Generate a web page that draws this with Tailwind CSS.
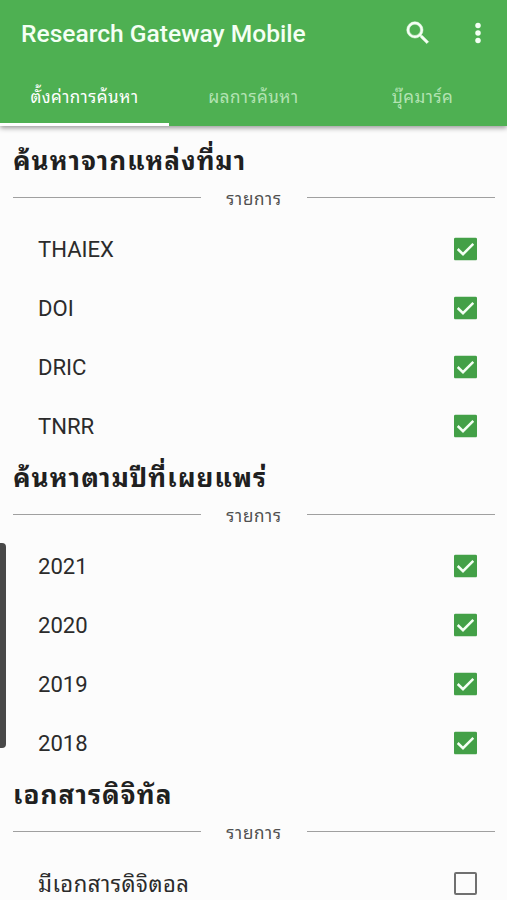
<!DOCTYPE html>
<html lang="th">
<head>
<meta charset="utf-8">
<title>Research Gateway Mobile</title>
<script src="https://cdn.jsdelivr.net/npm/@tailwindcss/browser@4"></script>
</head>
<body class="relative flex h-[900px] w-[507px] flex-col overflow-hidden bg-[#fcfcfc] font-[Roboto,'Noto_Sans_Thai_Looped',sans-serif] text-[#2b2b2b]">
<header class="relative z-10 flex h-[126px] shrink-0 flex-col bg-[#4eb052] text-white shadow-[0_2px_5px_rgba(0,0,0,0.4)]">
  <div class="flex h-[68px] items-center pl-[21px] pr-[14px]">
    <h1 class="flex-1 whitespace-nowrap text-[24.6px] font-medium text-[#f4fff4]">Research Gateway Mobile</h1>
    <svg class="mr-[30px] h-[30px] w-[30px] -translate-y-[1px]" viewBox="0 0 24 24" fill="#f4fff4" stroke="#f4fff4" stroke-width=".4"><path d="M15.5 14h-.79l-.28-.27A6.47 6.47 0 0 0 16 9.5 6.5 6.5 0 1 0 9.5 16c1.61 0 3.09-.59 4.23-1.57l.27.28v.79l5 4.99L20.49 19l-4.99-5zm-6 0C7.01 14 5 11.99 5 9.5S7.01 5 9.500 5 14 7.010 14 9.500 11.990 14 9.500 14z"/></svg>
    <svg class="h-[30px] w-[30px] -translate-y-[1px]" viewBox="0 0 24 24" fill="#f4fff4"><circle cx="12" cy="6" r="2.200"/><circle cx="12" cy="12" r="2.200"/><circle cx="12" cy="18" r="2.200"/></svg>
  </div>
  <nav class="grid h-[58px] grid-cols-3 text-center text-[17px] leading-[58px] tracking-[0.5px]">
    <a class="h-[58px] border-b-[3px] border-white"><span>ตั้งค่าการค้นหา</span></a>
    <a class="h-[58px] text-[#b3e3b3]"><span>ผลการค้นหา</span></a>
    <a class="h-[58px] text-[#b3e3b3]"><span>บุ๊คมาร์ค</span></a>
  </nav>
</header>
<main id="list" class="shrink-0 pt-[13px]"></main>
<div class="absolute -left-[4px] top-[543px] h-[205px] w-[9.500px] rounded-[4px] bg-[#484848]"></div>
<script>
const sections = [
  ['ค้นหาจากแหล่งที่มา', ['THAIEX', 'DOI', 'DRIC', 'TNRR'], true],
  ['ค้นหาตามปีที่เผยแพร่', ['2021', '2020', '2019', '2018'], true],
  ['เอกสารดิจิทัล', ['มีเอกสารดิจิตอล'], false]
];
const on = '<svg class="h-[23px] w-[23px] -translate-y-[0.5px]" viewBox="0 0 23 23"><rect width="23" height="23" rx="1.500" fill="#43a047"/><path d="M3.700 11.500l5.300 5.200L19.300 6.300" fill="none" stroke="#f4fff4" stroke-width="2.500"/></svg>';
const off = '<span class="h-[23px] w-[23px] rounded-[2px] border-2 border-[#707070]"></span>';
document.getElementById('list').innerHTML = sections.map(([title, rows, checked]) => `
<section>
  <h2 class="h-[44px] whitespace-nowrap pl-[13px] text-[26px] font-bold leading-[44px] tracking-[1.1px] text-[#202020]">${title}</h2>
  <div class="flex h-[37px] items-start pl-[13px] pr-[12px]">
    <i class="mt-[14px] h-px flex-1 bg-[#a0a0a0]"></i>
    <span class="w-[106px] text-center text-[17px] leading-[32px] tracking-[0.7px] text-[#505050]">รายการ</span>
    <i class="mt-[14px] h-px flex-1 bg-[#a0a0a0]"></i>
  </div>
  ${rows.map(r => `<div class="flex h-[59px] items-center justify-between pl-[38px] pr-[30px] ${checked ? 'text-[22.1px]' : 'text-[22px] tracking-[0.5px]'}"><span class="${checked ? '' : 'pt-[2px]'}">${r}</span>${checked ? on : off}</div>`).join('')}
</section>`).join('');
</script>
</body>
</html>
